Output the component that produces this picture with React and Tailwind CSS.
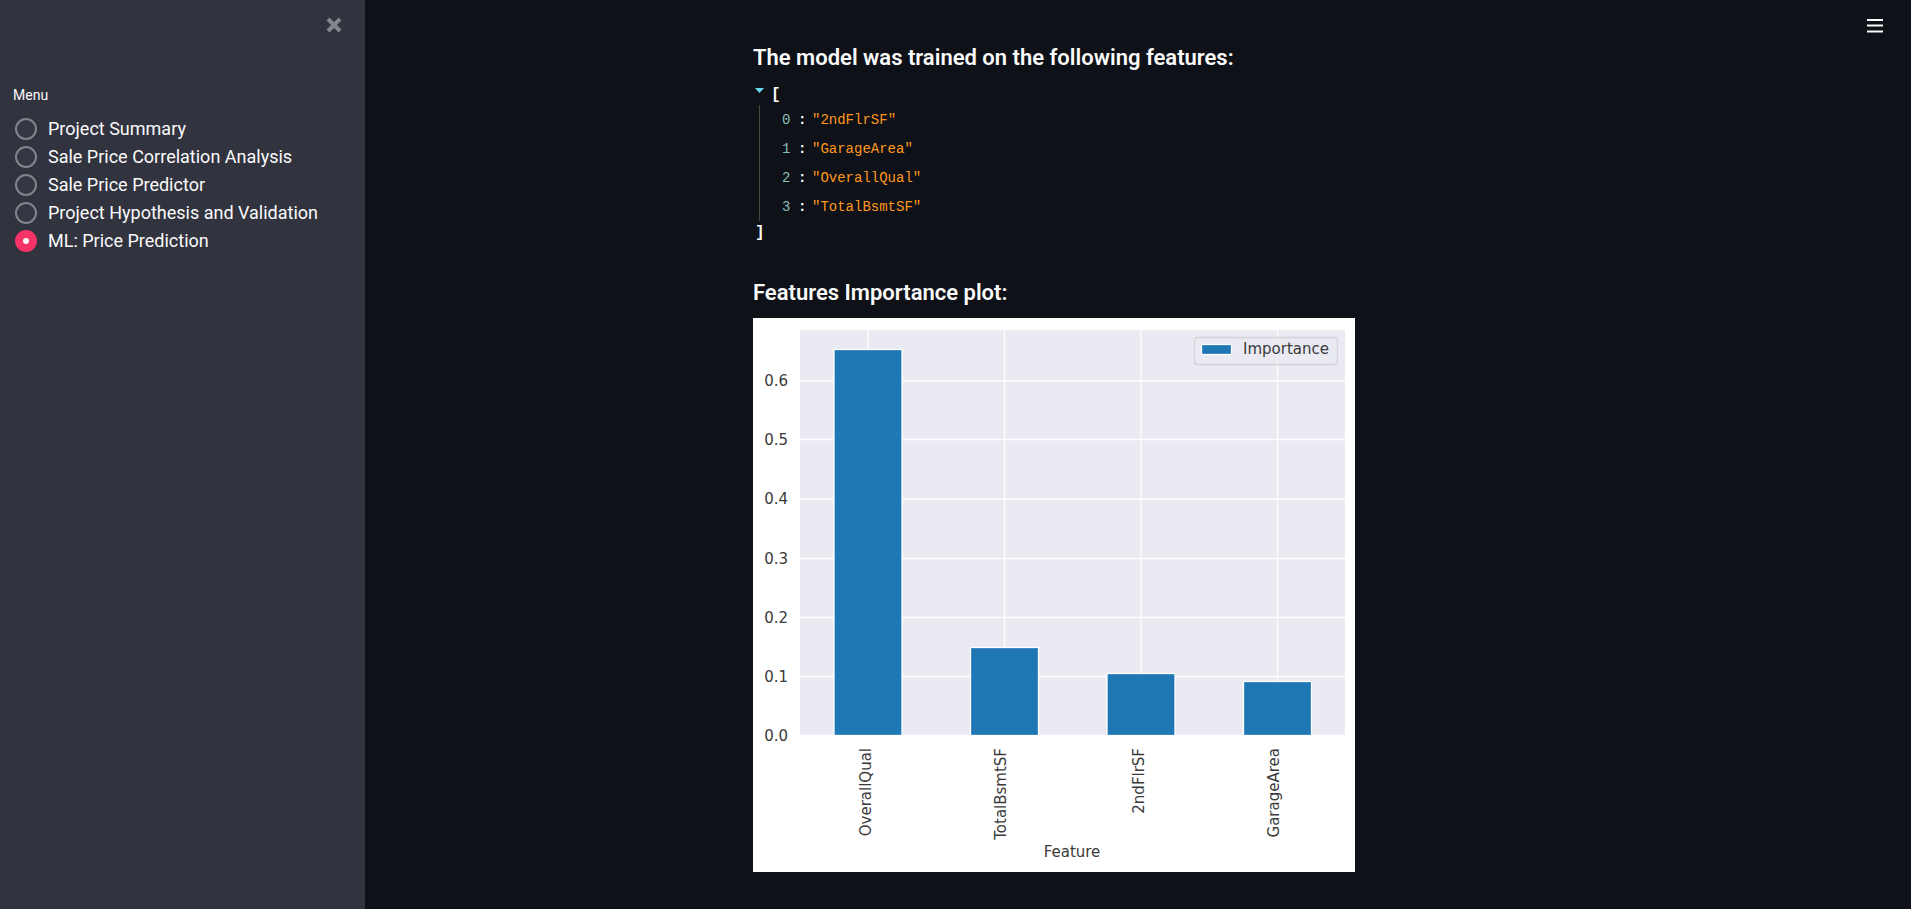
import { useState } from "react";

const PAGES = [
  "Project Summary",
  "Sale Price Correlation Analysis",
  "Sale Price Predictor",
  "Project Hypothesis and Validation",
  "ML: Price Prediction",
];

const FEATURES = ["2ndFlrSF", "GarageArea", "OverallQual", "TotalBsmtSF"];

const BARS = [
  { name: "OverallQual", x: 115, top: 32, labelX: 118 },
  { name: "TotalBsmtSF", x: 251.5, top: 330, labelX: 253 },
  { name: "2ndFlrSF", x: 388, top: 356, labelX: 391 },
  { name: "GarageArea", x: 524.5, top: 364, labelX: 526 },
];

const TICKS = [
  { label: "0.0", y: 417.5 },
  { label: "0.1", y: 358.5 },
  { label: "0.2", y: 299.5 },
  { label: "0.3", y: 240.5 },
  { label: "0.4", y: 181 },
  { label: "0.5", y: 121.5 },
  { label: "0.6", y: 63 },
];

function Sidebar() {
  const [page, setPage] = useState(PAGES[4]);
  return (
    <aside className="flex w-[365px] shrink-0 flex-col bg-[#31333f]">
      <div className="flex h-[50px] items-center justify-end px-[23px]">
        <button type="button" aria-label="Close sidebar" className="text-[#85868c]">
          <svg viewBox="0 0 16 16" className="block size-4 fill-none stroke-current" strokeWidth="4">
            <path d="M2 2 14 14M14 2 2 14" />
          </svg>
        </button>
      </div>
      <fieldset className="mt-[34px] px-[13px]">
        <legend className="mb-[9px] text-sm leading-[22px]">Menu</legend>
        <div className="flex flex-col">
          {PAGES.map((name) => (
            <label key={name} className="flex h-7 items-center gap-[11px] pl-[2px] text-[18px] leading-7">
              <input
                type="radio"
                name="page"
                checked={page === name}
                onChange={() => setPage(name)}
                className="size-[22px] shrink-0 appearance-none rounded-full border-2 border-[#83848b] bg-[#343743] checked:border-8 checked:border-[#f63366] checked:bg-[#fafafa]"
              />
              {name}
            </label>
          ))}
        </div>
      </fieldset>
    </aside>
  );
}

function FeatureList() {
  const [open, setOpen] = useState(true);
  return (
    <div className="flex flex-col items-start font-['Liberation_Mono',monospace] text-sm">
      <button type="button" aria-label="Toggle list" onClick={() => setOpen(!open)} className="flex h-[21px] items-center gap-[7px] pl-[2px]">
        <svg viewBox="0 0 9 5" className="mb-2 block h-[5px] w-[9px] fill-[#66d9ef]">
          <path d="M0 0H9L4.500 5Z" />
        </svg>
        <span className="text-base font-bold">[</span>
      </button>
      {open && (
        <ol className="ml-[6px] border-l border-[#49483e] pl-[22px]">
          {FEATURES.map((name, index) => (
            <li key={name} className="flex h-[29px] items-center">
              <span className="w-4 text-[#8abeb7]">{index}</span>
              <span className="w-[14px] font-bold">:</span>
              <span className="text-[#fd971f]">"{name}"</span>
            </li>
          ))}
        </ol>
      )}
      <span className="pl-[2px] text-base leading-6 font-bold">]</span>
    </div>
  );
}

function ImportanceChart() {
  return (
    <svg
      viewBox="0 0 602 554"
      role="img"
      aria-label="Features importance"
      className="block w-[602px] max-w-full bg-white font-['DejaVu_Sans',sans-serif] text-[15px]"
    >
      <rect x="47" y="12" width="545" height="405.500" fill="#eaeaf2" />
      <g stroke="#ffffff" strokeWidth="1.300">
        {TICKS.map((tick) => (
          <path key={tick.label} d={`M47 ${tick.y}H592`} />
        ))}
        {BARS.map((bar) => (
          <path key={bar.name} d={`M${bar.x} 12V417`} />
        ))}
      </g>
      {BARS.map((bar) => (
        <rect
          key={bar.name}
          x={bar.x - 34}
          y={bar.top - 0.5}
          width="68"
          height={418 - bar.top}
          fill="#1f77b4"
          stroke="#ffffff"
          strokeWidth="1.300"
        />
      ))}
      <g fill="#3a3a3a">
        {TICKS.map((tick) => (
          <text key={tick.label} x="35" y={tick.y + 5} textAnchor="end">
            {tick.label}
          </text>
        ))}
        {BARS.map((bar) => (
          <text key={bar.name} transform={`translate(${bar.labelX} 430) rotate(-90)`} textAnchor="end">
            {bar.name}
          </text>
        ))}
        <text x="319" y="539" textAnchor="middle">
          Feature
        </text>
      </g>
      <rect x="441.500" y="19.500" width="143" height="27" rx="3" fill="#eaeaf2" fillOpacity="0.800" stroke="#d3d3d6" strokeWidth="1.300" />
      <rect x="448.500" y="26.500" width="30" height="10" fill="#1f77b4" stroke="#ffffff" strokeWidth="1.300" />
      <text x="490" y="36" fill="#3a3a3a">
        Importance
      </text>
    </svg>
  );
}

export default function App() {
  return (
    <div className="flex min-h-screen bg-[#0e1117] font-['Roboto',sans-serif] text-[#fafafa]">
      <Sidebar />
      <main className="relative flex grow justify-center">
        <button type="button" aria-label="Main menu" className="absolute top-[18px] right-7">
          <svg viewBox="0 0 16 16" className="block size-4 fill-current">
            <path d="M0 1H16V3H0ZM0 6.500H16V8.500H0ZM0 12.500H16V14.500H0Z" />
          </svg>
        </button>
        <div className="w-full max-w-[770px] pt-[42px] pb-9">
          <h3 className="mb-[10px] text-[22px] leading-8 font-semibold">The model was trained on the following features:</h3>
          <FeatureList />
          <h3 className="mt-8 mb-[9px] text-[22px] leading-8 font-semibold">Features Importance plot:</h3>
          <ImportanceChart />
        </div>
      </main>
    </div>
  );
}
